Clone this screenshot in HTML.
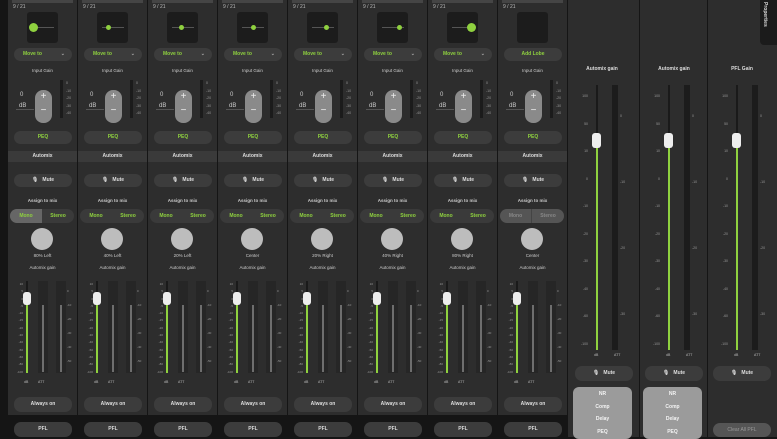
<!DOCTYPE html>
<html><head><meta charset="utf-8"><style>
*{box-sizing:border-box}
body{margin:0;width:777px;height:437px;background:#151515;overflow:hidden;font-family:"Liberation Sans",sans-serif;position:relative;color:#ddd}
.s{position:absolute;top:0;width:69px;height:415px;background:#2d2d2d}
.s>*{position:absolute}
.tb{left:4px;top:0;width:61px;height:3px;background:#454545}
.ch{left:5px;top:4px;font-size:5px;color:#bbb}
.th{left:19px;top:12px;width:31px;height:31px;background:#1c1c1c;border-radius:3px}
.th i{position:absolute;top:15px;left:5px;width:22px;height:1px;background:#555}
.th b{position:absolute;border-radius:50%;background:#8fd13f}
.pill{left:6px;width:58px;height:13px;background:#3c3c3c;border-radius:7px;font-size:5px;font-weight:bold;text-align:center;line-height:13px}
.g{color:#8fd13f}
.mv{top:48px;text-align:left;padding-left:9px}
.mv span{position:absolute;right:7px;color:#aaa}
.lbl{left:0;width:69px;text-align:center;font-size:4.5px;color:#ccc}
.knob{left:27px;top:90px;width:17px;height:33px;background:#8a8a8a;border-radius:8px;color:#eee;font-size:10px;text-align:center;line-height:14px}
.vm{left:52px;top:80px;width:3px;height:38px;background:#1b1b1b}
.vl{left:58px;top:80px;font-size:3.5px;color:#999;line-height:7.5px}
.am{left:0;top:151px;width:69px;height:11px;background:#3a3a3a;font-size:5px;text-align:center;line-height:11px;color:#ddd;font-weight:bold}
.seg{left:2px;top:209px;width:64px;height:14px;border-radius:7px;background:#3a3a3a;font-size:5px;font-weight:bold;line-height:14px;overflow:hidden}
.seg span{position:absolute;top:0;width:32px;text-align:center;height:14px}
.pan{left:23px;top:228px;width:22px;height:22px;border-radius:50%;background:#bdbdbd}
.sc{left:3px;top:281px;font-size:3px;color:#999;line-height:7.3px;text-align:right;width:12px}
.ft{left:18px;top:281px;width:2px;height:92px;background:#1a1a1a}
.fg{left:18px;top:300px;width:2px;height:73px;background:#8fd13f}
.cap{left:15px;top:292px;width:8px;height:13px;background:#eee;border-radius:3px}
.mt{top:281px;width:10px;height:92px;background:#262626}
.ml{top:305px;width:2px;height:67px;background:#6e6e6e}
.rs{left:59px;top:284px;font-size:3px;color:#999;line-height:14px}
.ft2{top:380px;font-size:3.5px;color:#bbb}
.pfl{position:absolute;top:422px;height:15px;width:58px;background:#3c3c3c;border-radius:7px;font-size:5px;font-weight:bold;text-align:center;line-height:15px;color:#ddd}
.rc{position:absolute;top:0;height:437px;background:#2d2d2d}
.rc>*{position:absolute}
.rl{top:66px;font-size:5px;color:#ddd;text-align:center;width:68px;left:0;font-weight:bold}
.rsc{left:6px;top:83px;font-size:3.5px;color:#999;line-height:27.5px;text-align:right;width:14px}
.rt{left:28px;top:85px;width:2px;height:265px;background:#1a1a1a}
.rg{left:28px;top:145px;width:2px;height:205px;background:#8fd13f}
.rcap{left:24px;top:133px;width:9px;height:15px;background:#eee;border-radius:3px}
.rm{left:44px;top:85px;width:6px;height:265px;background:#1c1c1c}
.fx{left:5px;top:387px;width:59px;height:52px;background:#9b9b9b;border-radius:6px;font-size:5px;font-weight:bold;text-align:center;color:#f4f4f4;line-height:12.5px;padding-top:1px}
</style></head><body>

<!-- strips -->
<div class="s" style="left:8px">
<div class="tb"></div><div class="ch">9 / 21</div>
<div class="th"><i></i><b style="left:2px;top:11px;width:9px;height:9px"></b></div>
<div class="pill mv g">Move to<span>⌄</span></div>
<div class="lbl" style="top:68px">Input Gain</div>
<div style="left:12px;top:92px;font-size:6px;color:#ccc">0</div>
<div style="left:8px;top:103px;font-size:6px;color:#ccc;border-bottom:1px solid #555;width:18px;padding-left:3px">dB</div>
<div class="knob">+<br>−</div><div class="vm"></div><div class="vl">0<br>-10<br>-20<br>-30<br>-40</div>
<div class="pill g" style="top:131px">PEQ</div>
<div class="am">Automix</div>
<div class="pill" style="top:174px">🎙&nbsp;&nbsp;&nbsp;Mute</div>
<div class="lbl" style="top:198px;font-weight:bold">Assign to mix</div>
<div class="seg"><span class="g" style="left:0;background:#666">Mono</span><span class="g" style="left:32px">Stereo</span></div>
<div class="pan"></div><div class="lbl" style="top:253px">80% Left</div>
<div class="lbl" style="top:265px">Automix gain</div>
<div class="sc">10<br>5<br>0<br>-5<br>-10<br>-15<br>-20<br>-30<br>-40<br>-50<br>-60<br>-80<br>-100</div>
<div class="ft"></div><div class="fg"></div><div class="cap"></div>
<div class="mt" style="left:30px"></div><div class="ml" style="left:34px"></div>
<div class="mt" style="left:48px"></div><div class="ml" style="left:52px"></div>
<div class="rs">0<br>-10<br>-20<br>-30<br>-40<br>-50</div>
<div class="ft2" style="left:16px">dB</div><div class="ft2" style="left:30px">ATT</div>
<div class="pill" style="top:397px;height:15px;line-height:15px">Always on</div>
</div>
<div class="pfl" style="left:14px">PFL</div>

<div class="s" style="left:78px">
<div class="tb"></div><div class="ch">9 / 21</div>
<div class="th"><i></i><b style="left:9px;top:13px;width:5px;height:5px"></b></div>
<div class="pill mv g">Move to<span>⌄</span></div>
<div class="lbl" style="top:68px">Input Gain</div>
<div style="left:12px;top:92px;font-size:6px;color:#ccc">0</div>
<div style="left:8px;top:103px;font-size:6px;color:#ccc;border-bottom:1px solid #555;width:18px;padding-left:3px">dB</div>
<div class="knob">+<br>−</div><div class="vm"></div><div class="vl">0<br>-10<br>-20<br>-30<br>-40</div>
<div class="pill g" style="top:131px">PEQ</div>
<div class="am">Automix</div>
<div class="pill" style="top:174px">🎙&nbsp;&nbsp;&nbsp;Mute</div>
<div class="lbl" style="top:198px;font-weight:bold">Assign to mix</div>
<div class="seg"><span class="g" style="left:0">Mono</span><span class="g" style="left:32px">Stereo</span></div>
<div class="pan"></div><div class="lbl" style="top:253px">40% Left</div>
<div class="lbl" style="top:265px">Automix gain</div>
<div class="sc">10<br>5<br>0<br>-5<br>-10<br>-15<br>-20<br>-30<br>-40<br>-50<br>-60<br>-80<br>-100</div>
<div class="ft"></div><div class="fg"></div><div class="cap"></div>
<div class="mt" style="left:30px"></div><div class="ml" style="left:34px"></div>
<div class="mt" style="left:48px"></div><div class="ml" style="left:52px"></div>
<div class="rs">0<br>-10<br>-20<br>-30<br>-40<br>-50</div>
<div class="ft2" style="left:16px">dB</div><div class="ft2" style="left:30px">ATT</div>
<div class="pill" style="top:397px;height:15px;line-height:15px">Always on</div>
</div>
<div class="pfl" style="left:84px">PFL</div>

<div class="s" style="left:148px">
<div class="tb"></div><div class="ch">9 / 21</div>
<div class="th"><i></i><b style="left:12px;top:13px;width:5px;height:5px"></b></div>
<div class="pill mv g">Move to<span>⌄</span></div>
<div class="lbl" style="top:68px">Input Gain</div>
<div style="left:12px;top:92px;font-size:6px;color:#ccc">0</div>
<div style="left:8px;top:103px;font-size:6px;color:#ccc;border-bottom:1px solid #555;width:18px;padding-left:3px">dB</div>
<div class="knob">+<br>−</div><div class="vm"></div><div class="vl">0<br>-10<br>-20<br>-30<br>-40</div>
<div class="pill g" style="top:131px">PEQ</div>
<div class="am">Automix</div>
<div class="pill" style="top:174px">🎙&nbsp;&nbsp;&nbsp;Mute</div>
<div class="lbl" style="top:198px;font-weight:bold">Assign to mix</div>
<div class="seg"><span class="g" style="left:0">Mono</span><span class="g" style="left:32px">Stereo</span></div>
<div class="pan"></div><div class="lbl" style="top:253px">20% Left</div>
<div class="lbl" style="top:265px">Automix gain</div>
<div class="sc">10<br>5<br>0<br>-5<br>-10<br>-15<br>-20<br>-30<br>-40<br>-50<br>-60<br>-80<br>-100</div>
<div class="ft"></div><div class="fg"></div><div class="cap"></div>
<div class="mt" style="left:30px"></div><div class="ml" style="left:34px"></div>
<div class="mt" style="left:48px"></div><div class="ml" style="left:52px"></div>
<div class="rs">0<br>-10<br>-20<br>-30<br>-40<br>-50</div>
<div class="ft2" style="left:16px">dB</div><div class="ft2" style="left:30px">ATT</div>
<div class="pill" style="top:397px;height:15px;line-height:15px">Always on</div>
</div>
<div class="pfl" style="left:154px">PFL</div>

<div class="s" style="left:218px">
<div class="tb"></div><div class="ch">9 / 21</div>
<div class="th"><i></i><b style="left:14px;top:13px;width:5px;height:5px"></b></div>
<div class="pill mv g">Move to<span>⌄</span></div>
<div class="lbl" style="top:68px">Input Gain</div>
<div style="left:12px;top:92px;font-size:6px;color:#ccc">0</div>
<div style="left:8px;top:103px;font-size:6px;color:#ccc;border-bottom:1px solid #555;width:18px;padding-left:3px">dB</div>
<div class="knob">+<br>−</div><div class="vm"></div><div class="vl">0<br>-10<br>-20<br>-30<br>-40</div>
<div class="pill g" style="top:131px">PEQ</div>
<div class="am">Automix</div>
<div class="pill" style="top:174px">🎙&nbsp;&nbsp;&nbsp;Mute</div>
<div class="lbl" style="top:198px;font-weight:bold">Assign to mix</div>
<div class="seg"><span class="g" style="left:0">Mono</span><span class="g" style="left:32px">Stereo</span></div>
<div class="pan"></div><div class="lbl" style="top:253px">Center</div>
<div class="lbl" style="top:265px">Automix gain</div>
<div class="sc">10<br>5<br>0<br>-5<br>-10<br>-15<br>-20<br>-30<br>-40<br>-50<br>-60<br>-80<br>-100</div>
<div class="ft"></div><div class="fg"></div><div class="cap"></div>
<div class="mt" style="left:30px"></div><div class="ml" style="left:34px"></div>
<div class="mt" style="left:48px"></div><div class="ml" style="left:52px"></div>
<div class="rs">0<br>-10<br>-20<br>-30<br>-40<br>-50</div>
<div class="ft2" style="left:16px">dB</div><div class="ft2" style="left:30px">ATT</div>
<div class="pill" style="top:397px;height:15px;line-height:15px">Always on</div>
</div>
<div class="pfl" style="left:224px">PFL</div>

<div class="s" style="left:288px">
<div class="tb"></div><div class="ch">9 / 21</div>
<div class="th"><i></i><b style="left:17px;top:13px;width:5px;height:5px"></b></div>
<div class="pill mv g">Move to<span>⌄</span></div>
<div class="lbl" style="top:68px">Input Gain</div>
<div style="left:12px;top:92px;font-size:6px;color:#ccc">0</div>
<div style="left:8px;top:103px;font-size:6px;color:#ccc;border-bottom:1px solid #555;width:18px;padding-left:3px">dB</div>
<div class="knob">+<br>−</div><div class="vm"></div><div class="vl">0<br>-10<br>-20<br>-30<br>-40</div>
<div class="pill g" style="top:131px">PEQ</div>
<div class="am">Automix</div>
<div class="pill" style="top:174px">🎙&nbsp;&nbsp;&nbsp;Mute</div>
<div class="lbl" style="top:198px;font-weight:bold">Assign to mix</div>
<div class="seg"><span class="g" style="left:0">Mono</span><span class="g" style="left:32px">Stereo</span></div>
<div class="pan"></div><div class="lbl" style="top:253px">20% Right</div>
<div class="lbl" style="top:265px">Automix gain</div>
<div class="sc">10<br>5<br>0<br>-5<br>-10<br>-15<br>-20<br>-30<br>-40<br>-50<br>-60<br>-80<br>-100</div>
<div class="ft"></div><div class="fg"></div><div class="cap"></div>
<div class="mt" style="left:30px"></div><div class="ml" style="left:34px"></div>
<div class="mt" style="left:48px"></div><div class="ml" style="left:52px"></div>
<div class="rs">0<br>-10<br>-20<br>-30<br>-40<br>-50</div>
<div class="ft2" style="left:16px">dB</div><div class="ft2" style="left:30px">ATT</div>
<div class="pill" style="top:397px;height:15px;line-height:15px">Always on</div>
</div>
<div class="pfl" style="left:294px">PFL</div>

<div class="s" style="left:358px">
<div class="tb"></div><div class="ch">9 / 21</div>
<div class="th"><i></i><b style="left:20px;top:13px;width:5px;height:5px"></b></div>
<div class="pill mv g">Move to<span>⌄</span></div>
<div class="lbl" style="top:68px">Input Gain</div>
<div style="left:12px;top:92px;font-size:6px;color:#ccc">0</div>
<div style="left:8px;top:103px;font-size:6px;color:#ccc;border-bottom:1px solid #555;width:18px;padding-left:3px">dB</div>
<div class="knob">+<br>−</div><div class="vm"></div><div class="vl">0<br>-10<br>-20<br>-30<br>-40</div>
<div class="pill g" style="top:131px">PEQ</div>
<div class="am">Automix</div>
<div class="pill" style="top:174px">🎙&nbsp;&nbsp;&nbsp;Mute</div>
<div class="lbl" style="top:198px;font-weight:bold">Assign to mix</div>
<div class="seg"><span class="g" style="left:0">Mono</span><span class="g" style="left:32px">Stereo</span></div>
<div class="pan"></div><div class="lbl" style="top:253px">40% Right</div>
<div class="lbl" style="top:265px">Automix gain</div>
<div class="sc">10<br>5<br>0<br>-5<br>-10<br>-15<br>-20<br>-30<br>-40<br>-50<br>-60<br>-80<br>-100</div>
<div class="ft"></div><div class="fg"></div><div class="cap"></div>
<div class="mt" style="left:30px"></div><div class="ml" style="left:34px"></div>
<div class="mt" style="left:48px"></div><div class="ml" style="left:52px"></div>
<div class="rs">0<br>-10<br>-20<br>-30<br>-40<br>-50</div>
<div class="ft2" style="left:16px">dB</div><div class="ft2" style="left:30px">ATT</div>
<div class="pill" style="top:397px;height:15px;line-height:15px">Always on</div>
</div>
<div class="pfl" style="left:364px">PFL</div>

<div class="s" style="left:428px">
<div class="tb"></div><div class="ch">9 / 21</div>
<div class="th"><i></i><b style="left:20px;top:11px;width:9px;height:9px"></b></div>
<div class="pill mv g">Move to<span>⌄</span></div>
<div class="lbl" style="top:68px">Input Gain</div>
<div style="left:12px;top:92px;font-size:6px;color:#ccc">0</div>
<div style="left:8px;top:103px;font-size:6px;color:#ccc;border-bottom:1px solid #555;width:18px;padding-left:3px">dB</div>
<div class="knob">+<br>−</div><div class="vm"></div><div class="vl">0<br>-10<br>-20<br>-30<br>-40</div>
<div class="pill g" style="top:131px">PEQ</div>
<div class="am">Automix</div>
<div class="pill" style="top:174px">🎙&nbsp;&nbsp;&nbsp;Mute</div>
<div class="lbl" style="top:198px;font-weight:bold">Assign to mix</div>
<div class="seg"><span class="g" style="left:0">Mono</span><span class="g" style="left:32px">Stereo</span></div>
<div class="pan"></div><div class="lbl" style="top:253px">80% Right</div>
<div class="lbl" style="top:265px">Automix gain</div>
<div class="sc">10<br>5<br>0<br>-5<br>-10<br>-15<br>-20<br>-30<br>-40<br>-50<br>-60<br>-80<br>-100</div>
<div class="ft"></div><div class="fg"></div><div class="cap"></div>
<div class="mt" style="left:30px"></div><div class="ml" style="left:34px"></div>
<div class="mt" style="left:48px"></div><div class="ml" style="left:52px"></div>
<div class="rs">0<br>-10<br>-20<br>-30<br>-40<br>-50</div>
<div class="ft2" style="left:16px">dB</div><div class="ft2" style="left:30px">ATT</div>
<div class="pill" style="top:397px;height:15px;line-height:15px">Always on</div>
</div>
<div class="pfl" style="left:434px">PFL</div>

<div class="s" style="left:498px">
<div class="tb"></div><div class="ch">9 / 21</div>
<div class="th"></div>
<div class="pill g" style="top:48px">Add Lobe</div>
<div class="lbl" style="top:68px">Input Gain</div>
<div style="left:12px;top:92px;font-size:6px;color:#ccc">0</div>
<div style="left:8px;top:103px;font-size:6px;color:#ccc;border-bottom:1px solid #555;width:18px;padding-left:3px">dB</div>
<div class="knob">+<br>−</div><div class="vm"></div><div class="vl">0<br>-10<br>-20<br>-30<br>-40</div>
<div class="pill g" style="top:131px">PEQ</div>
<div class="am">Automix</div>
<div class="pill" style="top:174px">🎙&nbsp;&nbsp;&nbsp;Mute</div>
<div class="lbl" style="top:198px;font-weight:bold">Assign to mix</div>
<div class="seg" style="background:#555;color:#888"><span style="left:0;border-right:1px solid #444">Mono</span><span style="left:32px">Stereo</span></div>
<div class="pan"></div><div class="lbl" style="top:253px">Center</div>
<div class="lbl" style="top:265px">Automix gain</div>
<div class="sc">10<br>5<br>0<br>-5<br>-10<br>-15<br>-20<br>-30<br>-40<br>-50<br>-60<br>-80<br>-100</div>
<div class="ft"></div><div class="fg"></div><div class="cap"></div>
<div class="mt" style="left:30px"></div><div class="ml" style="left:34px"></div>
<div class="mt" style="left:48px"></div><div class="ml" style="left:52px"></div>
<div class="rs">0<br>-10<br>-20<br>-30<br>-40<br>-50</div>
<div class="ft2" style="left:16px">dB</div><div class="ft2" style="left:30px">ATT</div>
<div class="pill" style="top:397px;height:15px;line-height:15px">Always on</div>
</div>
<div class="pfl" style="left:504px">PFL</div>

<!-- right section -->
<div class="rc" style="left:568px;width:71px">
<div class="rl">Automix gain</div>
<div class="rsc">100<br>50<br>10<br>0<br>-10<br>-20<br>-30<br>-40<br>-60<br>-100</div>
<div class="rt"></div><div class="rg"></div><div class="rcap"></div><div class="rm"></div>
<div style="left:52px;top:83px;font-size:3.5px;color:#999;line-height:66px">0<br>-10<br>-20<br>-30<br>-40</div>
<div style="left:26px;top:353px;font-size:3.5px;color:#bbb">dB</div><div style="left:46px;top:353px;font-size:3.5px;color:#bbb">ATT</div>
<div class="pill" style="left:7px;top:366px;height:15px;line-height:15px">🎙&nbsp;&nbsp;&nbsp;Mute</div>
<div class="fx">NR<br>Comp<br>Delay<br>PEQ</div>
</div>
<div class="rc" style="left:640px;width:67px">
<div class="rl">Automix gain</div>
<div class="rsc">100<br>50<br>10<br>0<br>-10<br>-20<br>-30<br>-40<br>-60<br>-100</div>
<div class="rt"></div><div class="rg"></div><div class="rcap"></div><div class="rm"></div>
<div style="left:52px;top:83px;font-size:3.5px;color:#999;line-height:66px">0<br>-10<br>-20<br>-30<br>-40</div>
<div style="left:26px;top:353px;font-size:3.5px;color:#bbb">dB</div><div style="left:46px;top:353px;font-size:3.5px;color:#bbb">ATT</div>
<div class="pill" style="left:5px;top:366px;height:15px;line-height:15px">🎙&nbsp;&nbsp;&nbsp;Mute</div>
<div class="fx" style="left:3px">NR<br>Comp<br>Delay<br>PEQ</div>
</div>
<div class="rc" style="left:708px;width:69px">
<div class="rl">PFL Gain</div>
<div class="rsc">100<br>50<br>10<br>0<br>-10<br>-20<br>-30<br>-40<br>-60<br>-100</div>
<div class="rt"></div><div class="rg"></div><div class="rcap"></div><div class="rm"></div>
<div style="left:52px;top:83px;font-size:3.5px;color:#999;line-height:66px">0<br>-10<br>-20<br>-30<br>-40</div>
<div style="left:26px;top:353px;font-size:3.5px;color:#bbb">dB</div><div style="left:46px;top:353px;font-size:3.5px;color:#bbb">ATT</div>
<div class="pill" style="left:5px;top:366px;height:15px;line-height:15px">🎙&nbsp;&nbsp;&nbsp;Mute</div>
<div class="pill" style="left:5px;top:423px;height:14px;line-height:14px;background:#555;color:#999;font-weight:normal">Clear All PFL</div>
<div style="left:52px;top:0;width:17px;height:45px;background:#1b1b1b;border-radius:0 0 0 4px"><div style="position:absolute;left:2px;top:2px;writing-mode:vertical-rl;font-size:5px;color:#ddd;font-weight:bold">Properties</div></div>
</div>
</body></html>
